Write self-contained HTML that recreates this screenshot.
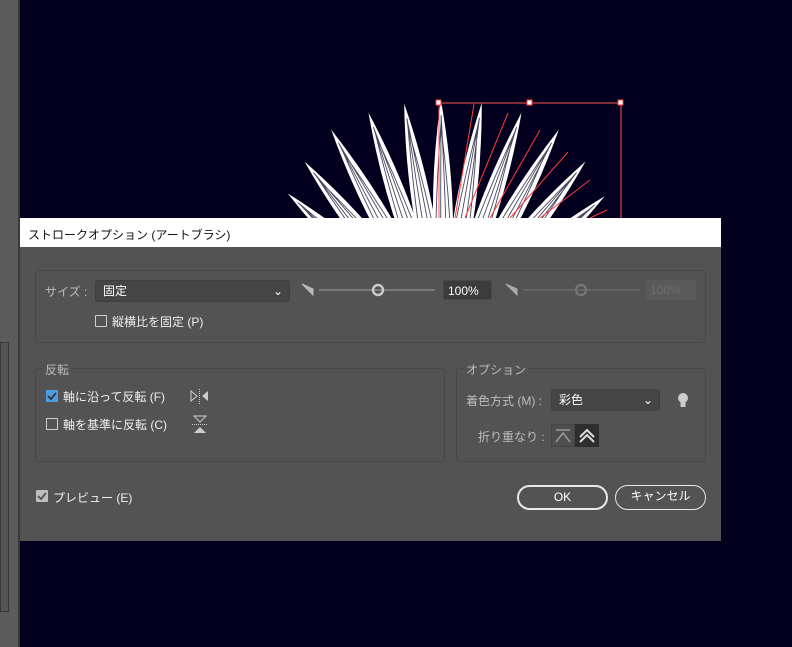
<!DOCTYPE html>
<html><head><meta charset="utf-8"><style>
*{margin:0;padding:0;box-sizing:border-box}
body{width:792px;height:647px;background:#02001e;position:relative;overflow:hidden;font-family:"Liberation Sans","Noto Sans CJK JP",sans-serif;font-size:12px;color:#e6e6e6}
.a{position:absolute}
.grp{position:absolute;border:1px solid #484848;border-radius:3px}
.lbl{position:absolute;font-size:12px;color:#d0d0d0;white-space:nowrap}
.cb{position:absolute;width:12px;height:12px;border:1px solid #cfcfcf;border-radius:1px}
.cbc{position:absolute;width:12px;height:12px;background:#4b9ee6;border-radius:1px}
.sel{position:absolute;height:22px;background:#454545;border:1px solid #3e3e3e;border-radius:3px;font-size:12px;color:#fff;padding:0 7px;line-height:20px}
.btn{position:absolute;height:25px;border:2px solid #e8e8e8;border-radius:13px;color:#fff;text-align:center;line-height:21px;font-size:12px}
</style></head><body>
<div class="a" style="left:0;top:0;width:18px;height:647px;background:#5b5b5b"></div>
<div class="a" style="left:18px;top:0;width:2px;height:647px;background:#3a3a3a"></div>
<div class="a" style="left:0;top:342px;width:9px;height:270px;background:#555;border:1px solid #383838"></div>
<svg class="a" style="left:0;top:0" width="792" height="647">
<defs><g id="leaf"><path d="M0,0 Q-20,-110 0,-235 Q20,-110 0,0Z" fill="#fff"/><path d="M-8,-20 Q-10,-110 0,-215 M-3,-20 Q-3,-110 0,-220 M3,-20 Q4,-110 0,-220 M8,-20 Q10,-110 0,-205" stroke="#4a4860" stroke-width="0.9" fill="none"/></g></defs>
<g transform="translate(445,335)">
<use href="#leaf" transform="rotate(-48) scale(1,0.9)"/>
<use href="#leaf" transform="rotate(-39) scale(1,0.95)"/>
<use href="#leaf" transform="rotate(-29)"/>
<use href="#leaf" transform="rotate(-19)"/>
<use href="#leaf" transform="rotate(-10)"/>
<use href="#leaf" transform="rotate(-1)"/>
<use href="#leaf" transform="rotate(9)"/>
<use href="#leaf" transform="rotate(19)"/>
<use href="#leaf" transform="rotate(29)"/>
<use href="#leaf" transform="rotate(39) scale(1,0.95)"/>
<use href="#leaf" transform="rotate(49) scale(1,0.9)"/>
</g>
<g stroke="#ff3b3b" stroke-width="1"><line x1="474" y1="104" x2="455" y2="218"/><line x1="508" y1="113" x2="465" y2="218"/><line x1="540" y1="130" x2="490" y2="218"/><line x1="568" y1="152" x2="510" y2="218"/><line x1="590" y1="180" x2="540" y2="218"/><line x1="607" y1="210" x2="590" y2="218"/></g>
<g stroke="#ff5555" fill="none"><line x1="439" y1="103" x2="621" y2="103"/><line x1="439" y1="103" x2="439" y2="218"/><line x1="621" y1="103" x2="621" y2="218"/></g>
<g fill="#fff" stroke="#ff4040"><rect x="436" y="100" width="5" height="5"/><rect x="527" y="100" width="5" height="5"/><rect x="618" y="100" width="5" height="5"/></g>
</svg>
<div class="a" style="left:20px;top:218px;width:701px;height:29px;background:#fff;color:#111;font-size:12px;padding:8px 0 0 8px">ストロークオプション (アートブラシ)</div>
<div class="a" style="left:20px;top:247px;width:701px;height:294px;background:#535353"></div>
<div class="grp" style="left:35px;top:270px;width:671px;height:73px"></div>
<div class="lbl" style="left:45px;top:283px;color:#bdbdbd">サイズ :</div>
<div class="sel" style="left:95px;top:280px;width:195px">固定<span style="position:absolute;right:6px;top:0">⌄</span></div>
<svg class="a" style="left:301px;top:283px" width="220" height="16"><path d="M1,1 L12,12 L12,6 L1,1Z" fill="#bbb" stroke="#bbb"/><line x1="18" y1="7" x2="134" y2="7" stroke="#888" stroke-width="1.5"/><circle cx="77" cy="7" r="5" fill="none" stroke="#ccc" stroke-width="2.4"/></svg>
<div class="a" style="left:443px;top:280px;width:49px;height:20px;background:#3c3c3c;border:1px solid #474747;border-radius:2px;color:#fff;padding:3px 4px">100%</div>
<svg class="a" style="left:505px;top:283px" width="140" height="16"><path d="M1,1 L12,12 L12,6Z" fill="#aaa" stroke="#aaa"/><line x1="18" y1="7" x2="135" y2="7" stroke="#6a6a6a" stroke-width="1.5"/><circle cx="76" cy="7" r="5" fill="none" stroke="#777" stroke-width="2.2"/></svg>
<div class="a" style="left:646px;top:280px;width:50px;height:20px;background:#5a5a5a;color:#6e6e6e;padding:3px 4px">100%</div>
<div class="cb" style="left:95px;top:315px"></div>
<div class="lbl" style="left:112px;top:313px;color:#f0f0f0">縦横比を固定 (P)</div>
<div class="grp" style="left:35px;top:368px;width:410px;height:94px"></div>
<div class="lbl" style="left:43px;top:361px;background:#535353;padding:0 2px;color:#bdbdbd">反転</div>
<div class="cbc" style="left:46px;top:390px"><svg width="12" height="12"><path d="M2,6 L5,9 L10,3" stroke="#333" stroke-width="1.8" fill="none"/></svg></div>
<div class="lbl" style="left:63px;top:388px;color:#f0f0f0">軸に沿って反転 (F)</div>
<svg class="a" style="left:190px;top:389px" width="20" height="15"><path d="M1,2 L7,7 L1,12Z" fill="none" stroke="#ccc"/><path d="M18,2 L12,7 L18,12Z" fill="#ccc"/><line x1="9.5" y1="0" x2="9.5" y2="15" stroke="#ccc" stroke-dasharray="1,1"/></svg>
<div class="cb" style="left:46px;top:418px"></div>
<div class="lbl" style="left:63px;top:416px;color:#f0f0f0">軸を基準に反転 (C)</div>
<svg class="a" style="left:192px;top:415px" width="16" height="20"><path d="M2,1 L14,1 L8,7Z" fill="none" stroke="#ccc"/><line x1="0" y1="9.5" x2="16" y2="9.5" stroke="#ccc" stroke-dasharray="1,1"/><path d="M2,18 L14,18 L8,12Z" fill="#ccc"/></svg>
<div class="grp" style="left:456px;top:368px;width:250px;height:94px"></div>
<div class="lbl" style="left:464px;top:361px;background:#535353;padding:0 2px;color:#bdbdbd">オプション</div>
<div class="lbl" style="left:466px;top:392px;color:#bdbdbd">着色方式 (M) :</div>
<div class="sel" style="left:551px;top:389px;width:109px">彩色<span style="position:absolute;right:6px;top:0">⌄</span></div>
<svg class="a" style="left:677px;top:392px" width="12" height="17"><circle cx="6" cy="6" r="5" fill="#ccc"/><rect x="3.5" y="10" width="5" height="5" fill="#ccc"/></svg>
<div class="lbl" style="left:478px;top:428px;color:#bdbdbd">折り重なり :</div>
<div class="a" style="left:551px;top:424px;width:24px;height:23px;background:#4e4e4e;border:1px solid #444"></div>
<svg class="a" style="left:555px;top:428px" width="16" height="15"><path d="M1,2 L15,2 M1,14 L8,5 L15,14" stroke="#999" fill="none" stroke-width="1.5"/></svg>
<div class="a" style="left:575px;top:424px;width:24px;height:23px;background:#2e2e2e"></div>
<svg class="a" style="left:579px;top:428px" width="16" height="15"><path d="M1,9 L8,2 L15,9 M1,14 L8,7 L15,14" stroke="#ddd" fill="none" stroke-width="2"/></svg>
<div class="a" style="left:36px;top:490px;width:12px;height:12px;background:#bdbdbd;border-radius:1px"><svg width="12" height="12"><path d="M2,6 L5,9 L10,3" stroke="#555" stroke-width="1.8" fill="none"/></svg></div>
<div class="lbl" style="left:53px;top:489px;color:#f0f0f0">プレビュー (E)</div>
<div class="btn" style="left:517px;top:485px;width:91px">OK</div>
<div class="btn" style="left:615px;top:485px;width:91px;border-width:1.5px">キャンセル</div>
</body></html>
